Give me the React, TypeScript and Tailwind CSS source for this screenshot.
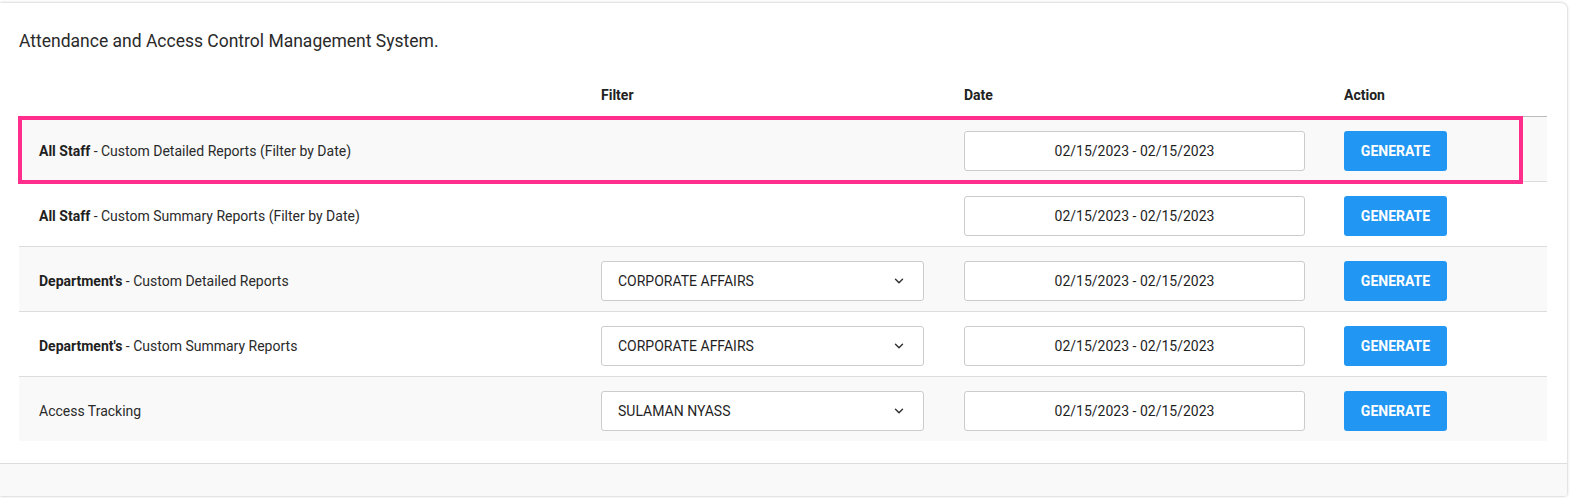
import { ChevronDown } from 'lucide-react'

type Row = {
  bold?: string
  label: string
  filter?: string
}

const ROWS: Row[] = [
  { bold: 'All Staff', label: 'Custom Detailed Reports (Filter by Date)' },
  { bold: 'All Staff', label: 'Custom Summary Reports (Filter by Date)' },
  { bold: "Department's", label: 'Custom Detailed Reports', filter: 'CORPORATE AFFAIRS' },
  { bold: "Department's", label: 'Custom Summary Reports', filter: 'CORPORATE AFFAIRS' },
  { label: 'Access Tracking', filter: 'SULAMAN NYASS' },
]

const DATE_RANGE = '02/15/2023 - 02/15/2023'

export default function App() {
  return (
    <div className="min-h-screen bg-white pt-[3px] font-['Roboto',sans-serif] text-[#333]">
      <div className="flex w-[1567px] flex-col rounded-tr-[6px] rounded-br-[3px] bg-white shadow-[0_0_3px_rgba(0,0,0,0.3)]">
        <div className="px-[19px] pt-[25px] pb-[22px]">
          <h1 className="text-[17.5px] leading-[26px] text-[#2a2a2a]">
            Attendance and Access Control Management System.
          </h1>

          <div className="relative mt-[21px] w-[1528px] text-[14px]">
            {/* Header */}
            <div className="grid h-[41px] grid-cols-[562px_363px_380px_1fr] items-center font-bold text-[#222]">
              <div className="px-5" />
              <div className="px-5">Filter</div>
              <div className="px-5">Date</div>
              <div className="px-5">Action</div>
            </div>

            {ROWS.map((row, i) => (
              <div
                key={i}
                className={`grid h-[65px] grid-cols-[562px_363px_380px_1fr] items-center border-t pt-[4px] ${
                  i === 0 ? 'border-[#bbb]' : 'border-[#ddd]'
                } ${i % 2 === 0 ? 'bg-[#f9f9f9]' : 'bg-white'}`}
              >
                <div className="px-5 text-[#2a2a2a]">
                  {row.bold && <span className="font-bold text-[#1f1f1f]">{row.bold}</span>}
                  {row.bold ? ` - ${row.label}` : row.label}
                </div>
                <div className="px-5">
                  {row.filter && (
                    <div className="flex h-[40px] w-[323px] items-center justify-between rounded-[3px] border border-[#ccc] bg-white pr-[17px] pl-4 text-[#1f1f1f]">
                      <span>{row.filter}</span>
                      <ChevronDown size={14} strokeWidth={2.5} className="text-[#333]" />
                    </div>
                  )}
                </div>
                <div className="px-5">
                  <div className="flex h-[40px] w-[341px] items-center justify-center rounded-[3px] border border-[#ccc] bg-white text-[#1f1f1f]">
                    {DATE_RANGE}
                  </div>
                </div>
                <div className="px-5">
                  <button className="h-[40px] w-[103px] rounded-[3px] bg-[#2196f3] text-[14px] font-bold text-white">
                    GENERATE
                  </button>
                </div>
              </div>
            ))}

            {/* highlight annotation */}
            <div className="pointer-events-none absolute top-[41px] left-[-1px] h-[68px] w-[1505px] border-4 border-[#ff2d8c]" />
          </div>
        </div>

        <div className="h-[33px] rounded-br-[3px] border-t border-[#ddd] bg-[#f9f9f9]" />
      </div>
    </div>
  )
}
